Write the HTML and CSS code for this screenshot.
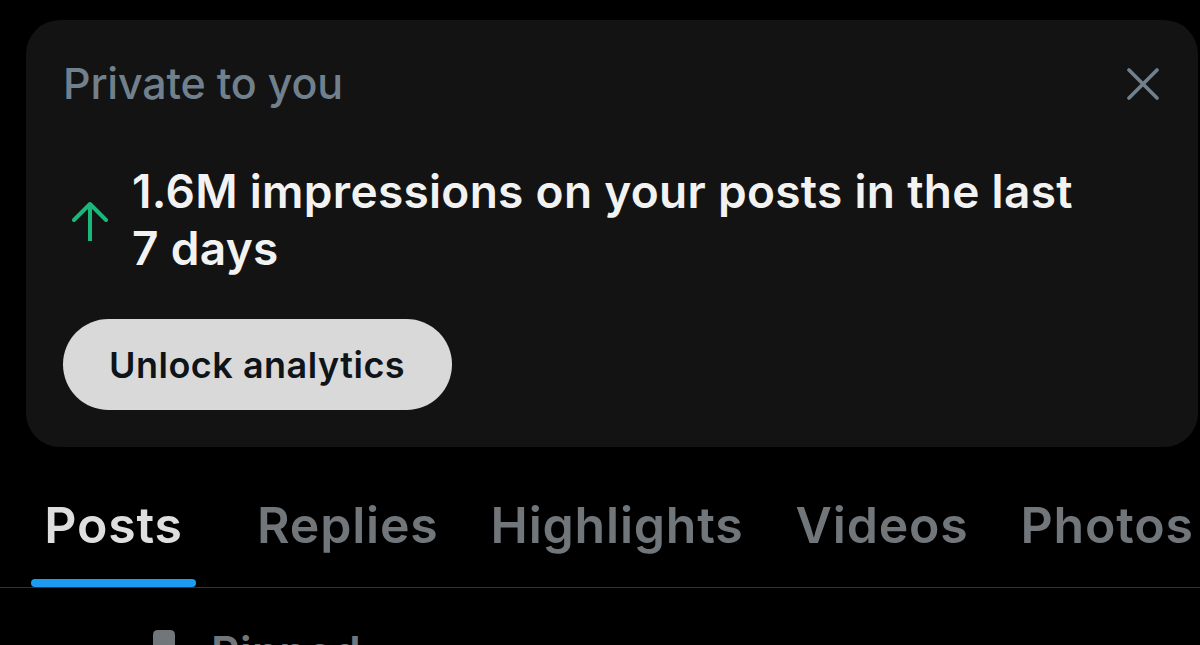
FILE: index.html
```html
<!DOCTYPE html>
<html lang="en">
<head>
<meta charset="utf-8">
<title>Profile</title>
<link rel="stylesheet" href="styles.css">
</head>
<body>
  <section class="card">
    <div class="card-head">
      <span class="private">Private to you</span>
      <svg class="close" viewBox="0 0 32 32" width="32" height="32" aria-label="Close">
        <path d="M2 2 L30 30 M30 2 L2 30" />
      </svg>
    </div>
    <div class="stat">
      <svg class="up" viewBox="0 0 36 40" width="36" height="40" aria-hidden="true">
        <path d="M18 3 V40 M2 19 L18 3 L34 19" />
      </svg>
      <p class="stat-text">1.6M impressions on your posts in the last 7 days</p>
    </div>
    <button class="unlock">Unlock analytics</button>
  </section>

  <nav class="tabs">
    <div class="tab active"><span class="label">Posts</span><span class="indicator"></span></div>
    <div class="tab"><span class="label">Replies</span><span class="indicator"></span></div>
    <div class="tab"><span class="label">Highlights</span><span class="indicator"></span></div>
    <div class="tab"><span class="label">Videos</span><span class="indicator"></span></div>
    <div class="tab"><span class="label">Photos</span><span class="indicator"></span></div>
  </nav>

  <div class="pinned">
    <svg class="pin" viewBox="0 0 24 44" width="24" height="44" aria-hidden="true">
      <path d="M1 5 Q1 0 6 0 H18 Q23 0 23 5 V18 L24 24 V28 H14 V43 H10 V28 H0 V24 L1 18 Z" />
    </svg>
    <span class="pinned-text">Pinned</span>
  </div>
</body>
</html>
```
FILE: styles.css
```css
html, body {
  margin: 0;
  padding: 0;
  background: #000;
  height: 645px;
  overflow: hidden;
}
body {
  font-family: Inter, "Noto Sans", sans-serif;
  color: #e7e9ea;
}

.card {
  margin: 20px 2px 0 26px;
  background: #131313;
  border-radius: 34px;
  padding: 37px 39px 37px 37px;
}

.card-head {
  display: flex;
  justify-content: space-between;
  align-items: center;
  height: 52px;
}
.private {
  font-size: 43px;
  line-height: 52px;
  font-weight: 500;
  color: #71808d;
  letter-spacing: -0.2px;
}
.close {
  fill: none;
  stroke: #71808d;
  stroke-width: 3.6;
  stroke-linecap: round;
  margin-top: 2px;
}

.stat {
  display: flex;
  align-items: center;
  margin-top: 54px;
}
.up {
  fill: none;
  stroke: #19b77a;
  stroke-width: 4;
  stroke-linecap: round;
  stroke-linejoin: round;
  flex: none;
  margin-left: 9px;
  margin-right: 24px;
  margin-top: 2px;
}
.stat-text {
  margin: 0;
  font-size: 46px;
  line-height: 57px;
  font-weight: 600;
  color: #f2f2f2;
  max-width: 965px;
  letter-spacing: 0.3px;
}

.unlock {
  display: block;
  margin-top: 42px;
  height: 91px;
  padding: 0 47px 0 46px;
  border: none;
  border-radius: 46px;
  background: #d9d9d9;
  color: #0f1419;
  font-family: Inter, "Noto Sans", sans-serif;
  font-size: 36px;
  font-weight: 600;
  letter-spacing: 0.5px;
}

.tabs {
  display: flex;
  gap: 52px;
  margin-top: 48px;
  padding-left: 31px;
  border-bottom: 1px solid #2f3336;
  white-space: nowrap;
}
.tab {
  display: flex;
  flex-direction: column;
  align-items: stretch;
  flex: none;
}
.tab.active {
  width: 165px;
  align-items: center;
  margin-right: 9px;
}
.label {
  font-size: 50px;
  line-height: 60px;
  font-weight: 600;
  letter-spacing: 0.8px;
  color: #71767b;
}
.tab.active .label { color: #dedede; }
.indicator {
  height: 8px;
  margin-top: 24px;
  border-radius: 4px;
  background: transparent;
  align-self: stretch;
}
.tab.active .indicator {
  background: #1d9bf0;
}

.pinned {
  display: flex;
  align-items: flex-start;
  margin-top: 37px;
  padding-left: 152px;
  gap: 35px;
}
.pin {
  fill: #71767b;
  flex: none;
  margin-top: 5px;
}
.pinned-text {
  font-size: 44px;
  line-height: 54px;
  font-weight: 600;
  letter-spacing: 0.5px;
  color: #71767b;
}
```
